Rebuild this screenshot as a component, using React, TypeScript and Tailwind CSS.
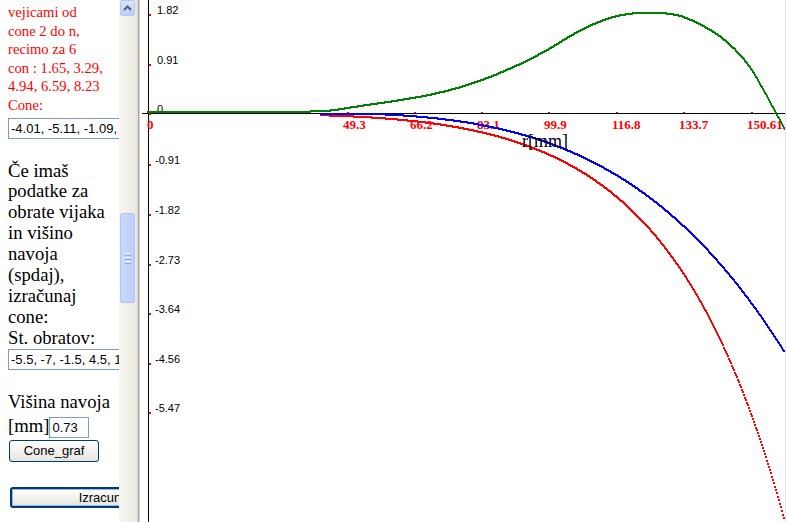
import React from 'react';

type Pt = [number, number];

const GREEN: Pt[] = [
  [147, 112], [290, 112], [310, 111.5], [330, 110.5], [363, 105.5], [397, 100.5], [433, 94],
  [470, 84], [510, 68.4], [545, 51], [570, 36], [590, 25.5], [613, 17], [637, 13], [660, 13],
  [683, 17], [713, 32], [733, 48], [750, 68], [763, 90], [775, 112], [787, 134],
];

// cubic hermite through the sampled points, x is the parameter
function interp(pts: Pt[], x: number) {
  let i = 0;
  while (i < pts.length - 2 && x > pts[i + 1][0]) i++;
  const [x0, y0] = pts[i];
  const [x1, y1] = pts[i + 1];
  const slope = (k: number) => {
    const a = pts[Math.max(0, k - 1)];
    const b = pts[Math.min(pts.length - 1, k + 1)];
    return (b[1] - a[1]) / (b[0] - a[0]);
  };
  const h = x1 - x0;
  const t = (x - x0) / h;
  const m0 = slope(i) * h;
  const m1 = slope(i + 1) * h;
  const t2 = t * t;
  const t3 = t2 * t;
  return (2 * t3 - 3 * t2 + 1) * y0 + (t3 - 2 * t2 + t) * m0 + (-2 * t3 + 3 * t2) * y1 + (t3 - t2) * m1;
}

const green = (x: number) => interp(GREEN, x);
const red = (x: number) => {
  const s = (x - 149) / 600;
  return 114 + 185 * s ** 4 + 110.5 * s ** 8;
};
const blue = (x: number) => {
  const s = (x - 149) / 600;
  return 114 + Math.max(0, -30.4 * s ** 2 + 216.9 * s ** 4);
};

// one 2x2 dot per pixel column, like the original plotter
function dots(f: (x: number) => number, from: number, to: number) {
  let d = '';
  for (let x = from; x <= to; x++) {
    const y = Math.round(f(x + 0.5));
    d += `M${x} ${y - 1}h2v2h-2z`;
  }
  return d;
}

const yTicks = [
  { y: 15, label: '1.82' },
  { y: 64.5, label: '0.91' },
  { y: 114, label: '0' },
  { y: 164.5, label: '-0.91' },
  { y: 214.5, label: '-1.82' },
  { y: 264.5, label: '-2.73' },
  { y: 314, label: '-3.64' },
  { y: 363.5, label: '-4.56' },
  { y: 413, label: '-5.47' },
];

const xTicks = [
  { x: 347, label: '49.3' },
  { x: 414, label: '66.2' },
  { x: 481, label: '83.1' },
  { x: 548, label: '99.9' },
  { x: 616, label: '116.8' },
  { x: 683, label: '133.7' },
  { x: 751, label: '150.61' },
];

function Graph() {
  return (
    <svg width={646} height={522} viewBox="140 0 646 522" shapeRendering="crispEdges" className="block">
      <rect x={148} y={0} width={1} height={522} fill="#000" />
      <rect x={142} y={113} width={644} height={1} fill="#000" />
      {yTicks.map((t) => (
        <g key={t.label}>
          <rect x={149} y={Math.round(t.y) - 1} width={2} height={2} fill="#ff0000" />
          <text
            x={t.label.startsWith('-') ? 155 : 157}
            y={Math.round(t.y) - 1}
            fontFamily="'Liberation Sans', Arial, sans-serif"
            fontSize={11}
            fill="#000"
          >
            {t.label}
          </text>
        </g>
      ))}
      <text x={147} y={128.5} fontFamily="'Liberation Serif', serif" fontWeight={700} fontSize={13} fill="#ff0000">
        0
      </text>
      {xTicks.map((t) => (
        <g key={t.label}>
          <rect x={t.x} y={112} width={2} height={1} fill="#ff0000" />
          <text x={t.x - 4} y={128.5} fontFamily="'Liberation Serif', serif" fontWeight={700} fontSize={13} fill="#ff0000">
            {t.label}
          </text>
        </g>
      ))}
      <path d={dots(red, 320, 783)} fill="#ff0000" />
      <path d={dots(blue, 320, 783)} fill="#0000ff" />
      <path d={dots(green, 147, 786)} fill="#008000" />
      <text x={522} y={147} fontFamily="'Liberation Serif', serif" fontSize={18} fill="#000">
        r[mm]
      </text>
    </svg>
  );
}

function Scrollbar() {
  return (
    <div className="flex h-full w-[17px] shrink-0 flex-col bg-linear-to-r from-[#f7f6f1] to-[#eceae2] px-[1px]">
      <div className="flex h-[16px] items-center justify-center rounded-[2px] border border-[#b7c9f3] bg-linear-to-b from-[#dde6fd] to-[#b9cdfb]">
        <svg width="9" height="6" viewBox="0 0 9 6">
          <polyline points="1,5 4.5,1.5 8,5" fill="none" stroke="#4d6185" strokeWidth="2" />
        </svg>
      </div>
      <div className="h-[197px]" />
      <div className="flex h-[90px] flex-col items-center justify-center gap-[1px] rounded-[2px] border border-[#b3c6f2] bg-linear-to-r from-[#c9d8fd] to-[#bccffb]">
        <div className="h-[1px] w-[6px] bg-[#eef3fe]" />
        <div className="h-[1px] w-[6px] bg-[#8eaaf2]" />
        <div className="h-[1px] w-[6px] bg-[#eef3fe]" />
        <div className="h-[1px] w-[6px] bg-[#8eaaf2]" />
        <div className="h-[1px] w-[6px] bg-[#eef3fe]" />
        <div className="h-[1px] w-[6px] bg-[#8eaaf2]" />
      </div>
    </div>
  );
}

function LeftPanel() {
  const inputCls =
    "block h-[21px] border border-[#7f9db9] bg-white px-[2px] text-[13px] text-black outline-none font-['Liberation_Sans',Arial,sans-serif]";
  const serif = "font-['Liberation_Serif','Times_New_Roman',serif]";
  return (
    <div className="h-full w-[119px] shrink-0 overflow-hidden bg-white">
      <div className="w-[240px] pl-2 pt-[3px]">
        <p className={`${serif} whitespace-nowrap text-[14.67px] leading-[18.6px] text-[#ff0000]`}>
          vejicami od
          <br />
          cone 2 do n,
          <br />
          recimo za 6
          <br />
          con : 1.65, 3.29,
          <br />
          4.94, 6.59, 8.23
          <br />
          Cone:
        </p>
        <input readOnly value="-4.01, -5.11, -1.09, 3.34, 8.23" className={`${inputCls} mt-[3px] w-[200px]`} />
        <p className={`${serif} mt-[22px] whitespace-nowrap text-[18.67px] leading-[20.9px] text-black`}>
          Če imaš
          <br />
          podatke za
          <br />
          obrate vijaka
          <br />
          in višino
          <br />
          navoja
          <br />
          (spdaj),
          <br />
          izračunaj
          <br />
          cone:
          <br />
          St. obratov:
        </p>
        <input readOnly value="-5.5, -7, -1.5, 4.5, 13.5" className={`${inputCls} w-[200px]`} />
        <p className={`${serif} mt-[22px] whitespace-nowrap text-[18.67px] leading-[20.9px] text-black`}>Višina navoja</p>
        <div className="flex items-start">
          <span className={`${serif} mt-[3px] text-[18.67px] leading-[20.9px] text-black`}>[mm]</span>
          <input readOnly value="0.73" className={`${inputCls} mt-[4px] w-[40px]`} />
        </div>
        <button className="mt-[2px] ml-[1px] block h-[22px] w-[90px] rounded-[3px] border border-[#003c74] bg-linear-to-b from-white to-[#e6e5dd] text-[13px] text-black font-['Liberation_Sans',Arial,sans-serif]">
          Cone_graf
        </button>
        <button className="mt-[25px] ml-[2px] block h-[21px] w-[190px] rounded-[3px] border-2 border-[#003c74] bg-linear-to-b from-white to-[#e6e5dd] text-[13px] leading-[15px] text-black font-['Liberation_Sans',Arial,sans-serif] shadow-[inset_0_0_0_1px_#98b8ea]">
          Izracunaj
        </button>
      </div>
    </div>
  );
}

export default function App() {
  return (
    <div className="flex h-[522px] w-[786px] overflow-hidden bg-white">
      <LeftPanel />
      <Scrollbar />
      <div className="flex h-full shrink-0">
        <div className="w-[2px] bg-[#e4e2da]" />
        <div className="w-[1px] bg-[#a5a39c]" />
        <div className="w-[1px] bg-[#d8d6d0]" />
      </div>
      <div className="relative h-full w-[646px] shrink-0 bg-white">
        <Graph />
        <div className="absolute right-0 top-0 h-full w-[1px] bg-[#e2e2e2]" />
      </div>
    </div>
  );
}
